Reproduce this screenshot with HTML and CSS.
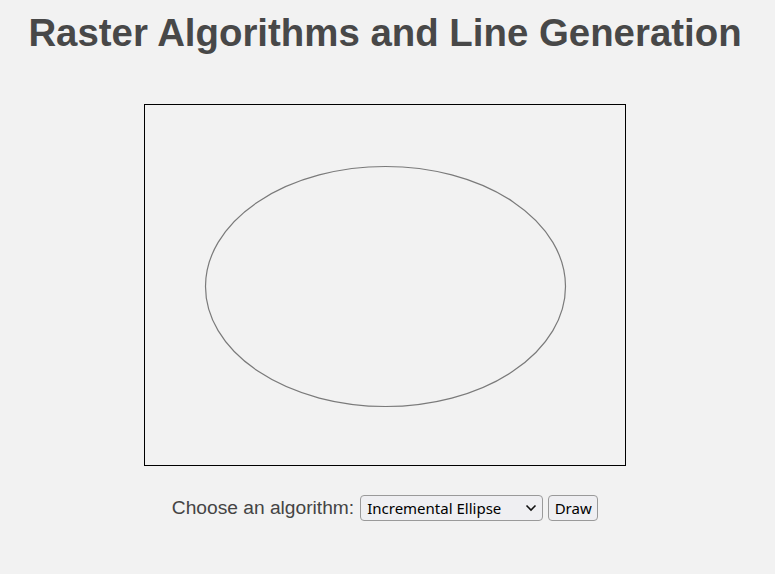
FILE: index.html
```html
<!DOCTYPE html>
<html lang="en">
<head>
<meta charset="utf-8">
<title>Raster Algorithms and Line Generation</title>
<link rel="stylesheet" href="styles.css">
</head>
<body>
<main class="page">
  <h1 class="title">Raster Algorithms and Line Generation</h1>
  <div class="canvas-wrap">
    <svg class="canvas" width="480" height="360" viewBox="0 0 480 360" xmlns="http://www.w3.org/2000/svg">
      <ellipse cx="240.5" cy="181.5" rx="180" ry="120" fill="none" stroke="#7a7a7a" stroke-width="1.2"/>
    </svg>
  </div>
  <div class="controls">
    <label class="label" for="algo">Choose an algorithm:</label>
    <div class="select-box">
      <select id="algo" class="select">
        <option>Incremental Ellipse</option>
      </select>
      <svg class="chev" width="12" height="8" viewBox="0 0 12 8"><path d="M1.5 1.5 L6 6 L10.5 1.5" fill="none" stroke="#111" stroke-width="1.6"/></svg>
    </div>
    <button class="btn" type="button">Draw</button>
  </div>
</main>
</body>
</html>
```
FILE: styles.css
```css
html, body {
  margin: 0;
  padding: 0;
  background: #f2f2f2;
}
.page {
  display: flex;
  flex-direction: column;
  align-items: center;
  padding-right: 5px;
  font-family: "Liberation Sans", Arial, sans-serif;
  color: #444;
}
.title {
  margin: 13px 0 0;
  font-size: 38.4px;
  font-weight: bold;
  line-height: 40px;
  color: #484848;
}
.canvas-wrap {
  margin-top: 51px;
  border: 1px solid #000;
  width: 480px;
  height: 360px;
}
.canvas {
  display: block;
}
.controls {
  margin-top: 29px;
  display: flex;
  align-items: center;
  gap: 5px;
}
.label {
  font-size: 19.2px;
  color: #444;
  margin-right: 1px;
}
.select-box {
  position: relative;
}
.select {
  appearance: none;
  -webkit-appearance: none;
  width: 183px;
  height: 26px;
  border: 1px solid #9a9a9a;
  border-radius: 4px;
  background: #efeff2;
  font-family: "Noto Sans", sans-serif;
  font-size: 15px;
  color: #000;
  padding: 0 24px 0 6px;
  display: block;
}
.chev {
  position: absolute;
  right: 6px;
  top: 9px;
  pointer-events: none;
}
.btn {
  height: 26px;
  width: 50px;
  border: 1px solid #9a9a9a;
  border-radius: 4px;
  background: #efeff2;
  font-family: "Noto Sans", sans-serif;
  font-size: 15px;
  color: #000;
  padding: 0;
}
```
